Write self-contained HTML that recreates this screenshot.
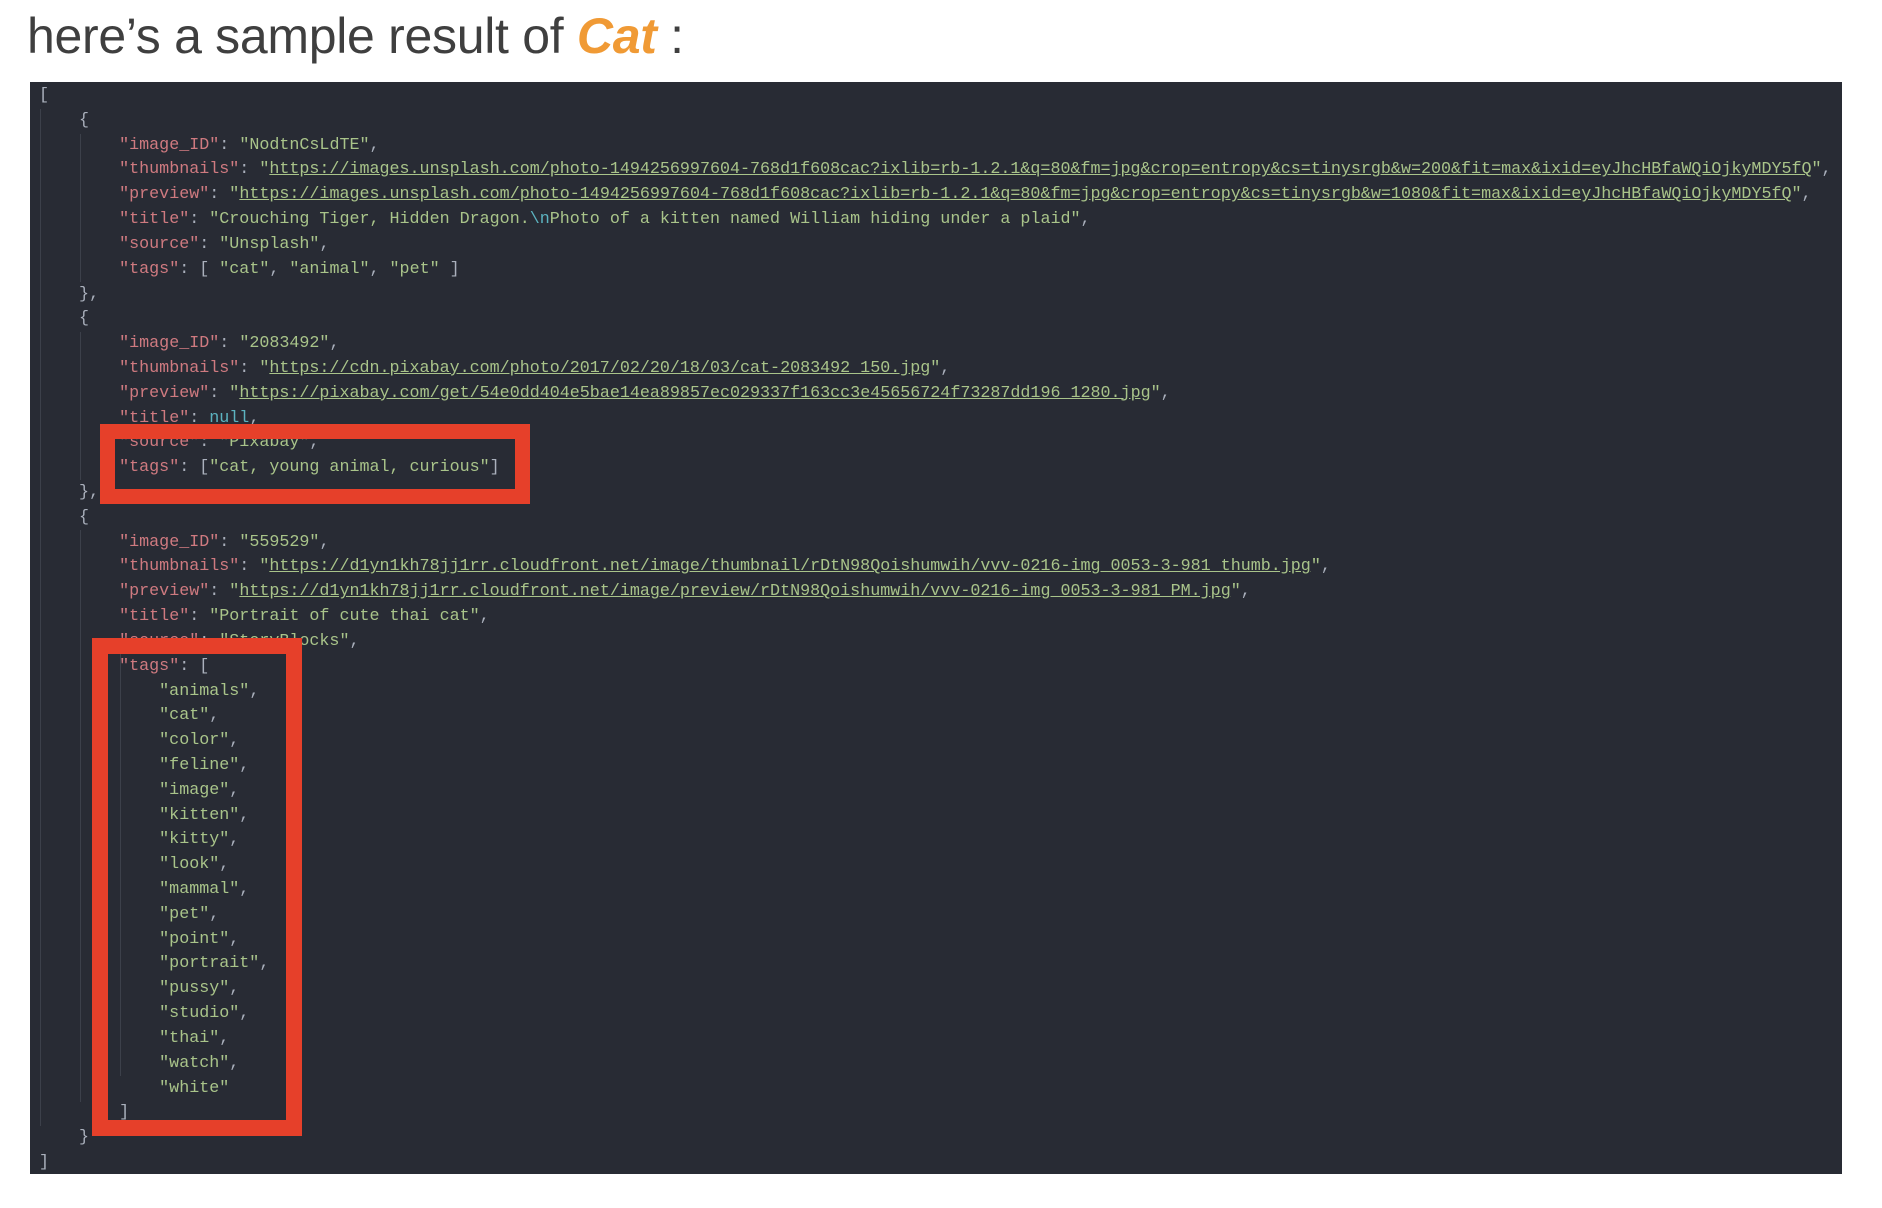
<!DOCTYPE html>
<html><head><meta charset="utf-8"><style>
html,body{margin:0;padding:0;background:#fff;width:1882px;height:1208px;overflow:hidden;position:relative}
h1{position:absolute;left:27px;top:11px;margin:0;font:400 50px/1 "Liberation Sans",sans-serif;color:#3f3f3f;white-space:nowrap;letter-spacing:-0.3px}
h1 b{color:#f09a35;font-style:italic;font-weight:700}
#code{position:absolute;left:30px;top:82px;width:1812px;height:1092px;background:#282b34;overflow:hidden}
pre{position:absolute;left:9px;top:2px;margin:0;font:16.7px/24.82px "Liberation Mono",monospace;color:#aab0bc;white-space:pre}
.k{color:#cf7a80}.s{color:#a9c48a}.u{color:#a9c48a;text-decoration:underline}.c{color:#5cb3c0}
.g{position:absolute;width:1px;background:#3c404a}
.box{position:absolute;border:15px solid #e6402a;box-sizing:border-box}
</style></head><body>
<h1>here’s a sample result of <b>Cat</b> :</h1>
<div id="code">
<div class="g" style="left:10px;top:27px;height:1017px"></div>
<div class="g" style="left:50px;top:52px;height:148px"></div>
<div class="g" style="left:50px;top:250px;height:148px"></div>
<div class="g" style="left:50px;top:448px;height:572px"></div>
<div class="g" style="left:90px;top:572px;height:422px"></div>
<pre>[
    {
        <span class="k">"image_ID"</span>: <span class="s">"NodtnCsLdTE"</span>,
        <span class="k">"thumbnails"</span>: <span class="s">"</span><span class="u">https://images.unsplash.com/photo-1494256997604-768d1f608cac?ixlib=rb-1.2.1&amp;q=80&amp;fm=jpg&amp;crop=entropy&amp;cs=tinysrgb&amp;w=200&amp;fit=max&amp;ixid=eyJhcHBfaWQiOjkyMDY5fQ</span><span class="s">"</span>,
        <span class="k">"preview"</span>: <span class="s">"</span><span class="u">https://images.unsplash.com/photo-1494256997604-768d1f608cac?ixlib=rb-1.2.1&amp;q=80&amp;fm=jpg&amp;crop=entropy&amp;cs=tinysrgb&amp;w=1080&amp;fit=max&amp;ixid=eyJhcHBfaWQiOjkyMDY5fQ</span><span class="s">"</span>,
        <span class="k">"title"</span>: <span class="s">"Crouching Tiger, Hidden Dragon.<span class="c">\n</span>Photo of a kitten named William hiding under a plaid"</span>,
        <span class="k">"source"</span>: <span class="s">"Unsplash"</span>,
        <span class="k">"tags"</span>: [ <span class="s">"cat"</span>, <span class="s">"animal"</span>, <span class="s">"pet"</span> ]
    },
    {
        <span class="k">"image_ID"</span>: <span class="s">"2083492"</span>,
        <span class="k">"thumbnails"</span>: <span class="s">"</span><span class="u">https://cdn.pixabay.com/photo/2017/02/20/18/03/cat-2083492_150.jpg</span><span class="s">"</span>,
        <span class="k">"preview"</span>: <span class="s">"</span><span class="u">https://pixabay.com/get/54e0dd404e5bae14ea89857ec029337f163cc3e45656724f73287dd196_1280.jpg</span><span class="s">"</span>,
        <span class="k">"title"</span>: <span class="c">null</span>,
        <span class="k">"source"</span>: <span class="s">"Pixabay"</span>,
        <span class="k">"tags"</span>: [<span class="s">"cat, young animal, curious"</span>]
    },
    {
        <span class="k">"image_ID"</span>: <span class="s">"559529"</span>,
        <span class="k">"thumbnails"</span>: <span class="s">"</span><span class="u">https://d1yn1kh78jj1rr.cloudfront.net/image/thumbnail/rDtN98Qoishumwih/vvv-0216-img_0053-3-981_thumb.jpg</span><span class="s">"</span>,
        <span class="k">"preview"</span>: <span class="s">"</span><span class="u">https://d1yn1kh78jj1rr.cloudfront.net/image/preview/rDtN98Qoishumwih/vvv-0216-img_0053-3-981_PM.jpg</span><span class="s">"</span>,
        <span class="k">"title"</span>: <span class="s">"Portrait of cute thai cat"</span>,
        <span class="k">"source"</span>: <span class="s">"StoryBlocks"</span>,
        <span class="k">"tags"</span>: [
            <span class="s">"animals"</span>,
            <span class="s">"cat"</span>,
            <span class="s">"color"</span>,
            <span class="s">"feline"</span>,
            <span class="s">"image"</span>,
            <span class="s">"kitten"</span>,
            <span class="s">"kitty"</span>,
            <span class="s">"look"</span>,
            <span class="s">"mammal"</span>,
            <span class="s">"pet"</span>,
            <span class="s">"point"</span>,
            <span class="s">"portrait"</span>,
            <span class="s">"pussy"</span>,
            <span class="s">"studio"</span>,
            <span class="s">"thai"</span>,
            <span class="s">"watch"</span>,
            <span class="s">"white"</span>
        ]
    }
]</pre>
</div>
<div class="box" style="left:100px;top:424px;width:430px;height:80px"></div>
<div class="box" style="left:92px;top:638px;width:210px;height:498px;border-width:16px"></div>
</body></html>
